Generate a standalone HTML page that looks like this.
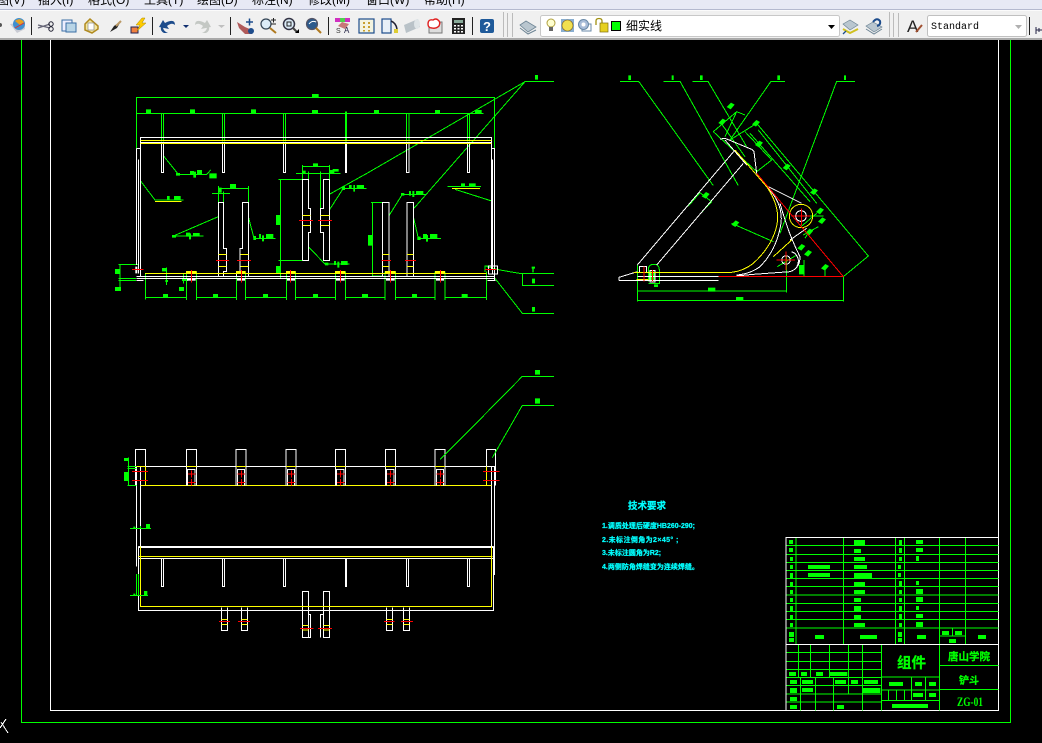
<!DOCTYPE html>
<html><head><meta charset="utf-8"><style>
html,body{margin:0;padding:0;background:#000;width:1042px;height:743px;overflow:hidden}
svg{display:block}
.z{stroke-width:3;fill:none;shape-rendering:crispEdges}
.g{stroke:#0f0}.w{stroke:#fff}.y{stroke:#ff0}.r{stroke:#f00}
.f{fill:#0f0;stroke:none}
.l{stroke-width:1;fill:none;shape-rendering:crispEdges}
text{font-family:"Liberation Sans","Noto Sans CJK SC",sans-serif}
</style></head><body>
<svg width="1042" height="743" viewBox="0 0 1042 743" xmlns="http://www.w3.org/2000/svg">
<defs>
<path id="b" d="M-12,3L1,-10L12,-4L0,10Z"/>
<g id="tab"><path class="z w" d="M0,346V238H30V346M4,346V298H26V346"/><path class="z y" d="M0,289H30"/><path class="z r" d="M5,312H27M16,302V322M5,337H27M16,327V346"/></g>
</defs>

<!-- chrome -->
<rect width="1042" height="40" fill="#f0f0f0"/>
<rect width="1042" height="9" fill="#e7e9f5"/>
<rect y="9" width="1042" height="1" fill="#b4b9cf"/>
<rect y="10" width="1042" height="1" fill="#fbfbfb"/>
<rect y="38" width="1042" height="2" fill="#a9a9a9"/>
<g font-size="12" fill="#000">
<text x="-3" y="4">图(V)</text><text x="38" y="4">插入(I)</text><text x="88" y="4">格式(O)</text><text x="144" y="4">工具(T)</text><text x="197" y="4">绘图(D)</text><text x="252" y="4">标注(N)</text><text x="308" y="4">修改(M)</text><text x="366" y="4">窗口(W)</text><text x="424" y="4">帮助(H)</text>
</g>
<path stroke="#222" stroke-width="1" d="M31.5,17V35M152.5,17V35M230.5,17V35M328.5,17V35M472.5,17V35M1029.5,17V35" shape-rendering="crispEdges"/>
<path stroke="#bbb" stroke-width="1" d="M503.5,12V37M507.5,13V37M512.5,13V37M889.5,12V37M893.5,13V37M898.5,13V37" shape-rendering="crispEdges"/>
<!-- icons left -->
<circle cx="0" cy="25" r="2" fill="#555"/>
<path d="M10,24L17,33L25,29V22Z" fill="#c9cbd3"/><circle cx="19" cy="24" r="6" fill="#3f8fd0"/><path d="M15,21Q20,17 24,22L20,25Z" fill="#e8a020"/><path d="M15,28L24,23" stroke="#d33" stroke-width="1"/>
<path d="M38,25L50,28M38,28L50,24" stroke="#667" stroke-width="1.2"/><circle cx="51" cy="24" r="2.2" fill="none" stroke="#223"/><circle cx="51" cy="29" r="2.2" fill="none" stroke="#223"/>
<rect x="62" y="20" width="10" height="11" fill="#eef" stroke="#3a6ea5"/><rect x="66" y="23" width="10" height="9" fill="#b8d4e6" stroke="#3a6ea5"/>
<path d="M85,24L90,19L98,26V29L92,33L85,30Z" fill="#f5e7a0" stroke="#b08a20" stroke-width="1.5"/><rect x="88" y="23" width="6" height="7" fill="#fff" stroke="#888" stroke-width=".7"/>
<path d="M110,32L114,26L121,21L117,28Z" fill="#222"/><path d="M116,26L121,21" stroke="#b96" stroke-width="2"/>
<rect x="131" y="27" width="7" height="6" fill="#f08040" stroke="#225" stroke-width="1"/><path d="M142,18L136,25H140L137,31L146,23H142L145,18Z" fill="#fc0" stroke="#a80" stroke-width=".5"/>
<path d="M159,27L163,20L165,23Q175,18 175,25Q172,22 167,26L169,29Z M163,27Q163,31 168,33L164,33Q160,31 161,27Z" fill="#1d4c8c"/><path d="M183,25H189L186,28Z" fill="#113070"/>
<path d="M211,27L207,20L205,23Q195,18 195,25Q198,22 203,26L201,29Z M207,27Q207,31 202,33L206,33Q210,31 209,27Z" fill="#c4c8c4"/><path d="M218,25H225L221.500,28Z" fill="#c0c0c0"/>
<path d="M237,22L245,27L252,30V34H245L239,28Z" fill="#b05a5a"/><circle cx="251" cy="31" r="3" fill="#1d4c8c"/><path d="M246,22H253M249.500,18.500V25.500" stroke="#1d4c8c" stroke-width="1.500"/>
<circle cx="266" cy="24" r="5" fill="#dcecf8" stroke="#345" stroke-width="1.200"/><path d="M270,28L276,33" stroke="#b07a20" stroke-width="2"/><path d="M271,20H276M273.500,18V22.500M271,24H276" stroke="#222" stroke-width="1"/>
<circle cx="289" cy="24" r="5.500" fill="#dcecf8" stroke="#334" stroke-width="1.500"/><rect x="287" y="22" width="4" height="4" fill="none" stroke="#222"/><path d="M293,28L297,32" stroke="#444" stroke-width="2"/><path d="M295,33H299V29Z" fill="#000"/>
<circle cx="312" cy="24" r="5.500" fill="#2b5a8c" stroke="#556" stroke-width="1.200"/><path d="M309,24Q312,20 316,22" stroke="#fff" fill="none"/><path d="M316,28L321,33" stroke="#b07a20" stroke-width="2"/>
<rect x="335" y="18" width="15" height="4" fill="#d030c0"/><rect x="340" y="18" width="5" height="4" fill="#50d050"/><path d="M342,22L349,24L345,29L338,26Z" fill="#c87878"/><text x="336" y="33" font-size="7" fill="#333">S</text><text x="344" y="33" font-size="8" fill="#224">A</text>
<rect x="359" y="19" width="15" height="14" fill="#f4f4e0" stroke="#1d4c8c" stroke-width="1.200"/><path d="M363,22h2v2h-2zM368,22h2v2h-2zM363,26h2v2h-2zM368,26h2v2h-2zM363,30h2v1.500h-2zM368,30h2v1.500h-2z" fill="#c8a030"/>
<rect x="382" y="19" width="9" height="14" fill="#e8f0f8" stroke="#1d4c8c" stroke-width="1.200"/><path d="M391,21Q396,23 397,29" stroke="#223" fill="none" stroke-width="1.500"/><rect x="394" y="29" width="4" height="4" fill="#dc3"/>
<path d="M404,25L418,19L420,27L406,33Z" fill="#b9c2c8"/><ellipse cx="417" cy="24" rx="3" ry="5" fill="#dfe5e8"/>
<rect x="429" y="22" width="13" height="11" fill="#ddd" stroke="#777" stroke-width="1"/><path d="M428,24Q428,19 433,20Q436,18 438,20Q441,22 439,26Q436,29 432,28Q428,28 428,24Z" fill="#fff" stroke="#e02020" stroke-width="1.400"/>
<rect x="452" y="18" width="13" height="16" fill="#222"/><rect x="454" y="20" width="9" height="3" fill="#8a9"/><path d="M454,25h2v1.500h-2zM457.500,25h2v1.500h-2zM461,25h2v1.500h-2zM454,28h2v1.500h-2zM457.500,28h2v1.500h-2zM461,28h2v1.500h-2zM454,31h2v1.500h-2zM457.500,31h2v1.500h-2zM461,31h2v1.500h-2z" fill="#fff"/>
<rect x="480" y="19" width="14" height="14" rx="2" fill="#1f5a9a"/><text x="483" y="31" font-size="13" font-weight="bold" fill="#fff">?</text>
<!-- layers -->
<path d="M520,25L526,21L536,27L528,32Z" fill="#b9c6cf" stroke="#6d8494" stroke-width=".8"/><path d="M520,28L528,34L536,30" fill="none" stroke="#6d8494"/>
<rect x="540.500" y="15.500" width="299" height="21" rx="2" fill="#fff" stroke="#c8c8c8"/>
<circle cx="551" cy="23" r="4" fill="#ffffd0" stroke="#b0a040"/><rect x="549" y="27" width="4" height="4" fill="#666"/>
<rect x="561" y="19" width="13" height="13" fill="#3a78b0" opacity=".6"/><circle cx="567.500" cy="25.500" r="5.500" fill="#f0e050" stroke="#806020" stroke-width=".6"/>
<rect x="582" y="24" width="9" height="7" fill="#fff" stroke="#6a8aa8"/><circle cx="583.500" cy="24.500" r="5" fill="#a8bcd8" stroke="#6a8aa8"/><circle cx="583.500" cy="24.500" r="2" fill="#fff"/>
<path d="M596,25V21Q596,18.500 599,18.500Q602,18.500 602,21V24" fill="none" stroke="#a09010" stroke-width="1.300"/><rect x="600" y="23" width="8" height="9" fill="#e6d020" stroke="#807010" stroke-width=".7"/>
<rect x="611.500" y="21.500" width="9" height="9" fill="#0f0" stroke="#000"/>
<text x="626" y="30" font-size="12" fill="#000" style="font-family:'Liberation Sans','WenQuanYi Zen Hei',sans-serif">细实线</text>
<path d="M828,25H835L831.500,29Z" fill="#000"/>
<path d="M843,24L850,20L858,25L850,30Z" fill="#b9c6cf" stroke="#6d8494" stroke-width=".7"/><path d="M843,29L850,33L858,29" fill="none" stroke="#d0c020" stroke-width="2"/><path d="M843,34L846,31" stroke="#1d4c8c" stroke-width="1.300"/>
<path d="M866,26L873,22L882,27L874,32Z" fill="#b9c6cf" stroke="#6d8494" stroke-width=".7"/><path d="M873,22Q877,17 880,21Q881,25 877,26" stroke="#1d4c8c" fill="none" stroke-width="2"/><path d="M866,29L874,34L882,29" stroke="#6d8494" fill="none"/>
<text x="907" y="32" font-size="17" fill="#222">A</text><path d="M916,32L922,25" stroke="#a05030" stroke-width="2"/>
<rect x="927.500" y="15.500" width="99" height="21" rx="2" fill="#fff" stroke="#c0c0c0"/>
<text x="931" y="29" font-size="10" fill="#000" style="font-family:'Liberation Mono',monospace">Standard</text>
<path d="M1015,25H1022L1018.500,29Z" fill="#b0b0b0"/>
<path d="M1036,27V34M1036,30H1042M1039,28V32" stroke="#224" stroke-width="1"/>

<!-- frames -->
<g class="l">
<path stroke="#0f0" d="M21.500,40V722.500H1010.500V40"/>
<path stroke="#fff" d="M50.500,40V710.500H998.500V40"/>
<path stroke="#fff" d="M6,719L0,728M1,722L8,733"/>
</g>

<!-- front view -->
<g transform="translate(110,70) scale(.33333)">
<g class="z g">
<path d="M80,235V82H1153V235M80,130H1120M154,130V215M161,130V215M337,130V215M344,130V215M520,130V215M527,130V215M706,125V215M709,125V215M890,130V215M897,130V215M1072,130V215M1079,130V215"/>
<path d="M106,610V688M230,605V690M259,605V690M379,610V690M406,610V690M530,605V690M556,605V690M677,605V690M706,605V690M825,605V690M856,605V690M975,605V690M1005,605V690M1130,605V690M106,682H230M259,682H379M406,682H530M556,682H677M706,682H825M856,682H975M1005,682H1130"/>
<path d="M577,285V340M658,285V340M577,290H658M558,310H692M595,305V330M631,305V415M512,328V625M505,328H577M505,571H577M505,625H578"/>
<path d="M325,348V397M415,348V397M325,355H415M306,370H360M340,365V397"/>
<path d="M787,397V618M783,397H817M787,618H817"/>
<path d="M160,257L205,313H290L302,300M91,332L135,390H220M325,440L190,498H280M415,440L432,505H497M595,530L645,582H718M658,420L700,355H770"/>
<path d="M658,373L776,307L1245,35H1332M910,417L1245,35M837,437L877,373H950M910,440L925,505H993M1012,349H1113M1035,358L1145,393"/>
<path d="M1125,606V588H1140M1130,590L1170,600L1228,610H1332M1237,610V647H1332M1155,625L1237,730H1332"/>
<path d="M25,583H85M30,583V660M25,626H78M25,631H78M170,592V645M220,610V640"/>
</g>
<path class="f" d="M606,72h20v10h-20zM108,118h15v12h-15zM240,118h15v12h-15zM423,118h15v12h-15zM606,120h18v10h-18zM792,120h15v10h-15zM975,120h15v10h-15zM1095,120h20v10h-20zM159,672h15v10h-15zM309,672h15v10h-15zM459,672h15v10h-15zM609,672h15v10h-15zM756,672h18v10h-18zM906,672h15v10h-15zM1055,672h18v10h-18zM609,280h15v10h-15zM577,302h10v8h-10zM658,300h15v12h-15zM668,297h18v8h-18zM360,342h18v13h-18zM325,353h10v15h-10zM498,435h14v30h-14zM498,588h14v22h-14zM774,495h14v32h-14zM198,309h12v8h-12zM240,303h12v10h-12zM261,300h15v12h-15zM250,305h8v18h-8zM298,310h22v15h-22zM171,378h8v12h-8zM192,378h20v12h-20zM186,495h12v8h-12zM228,488h12v12h-12zM249,489h20v10h-20zM237,490h6v18h-6zM430,498h8v12h-8zM447,492h6v12h-6zM468,492h22v14h-22zM456,496h6v18h-6zM645,578h10v8h-10zM672,573h6v12h-6zM693,573h20v12h-20zM682,575h6v18h-6zM695,350h10v10h-10zM717,345h8v10h-8zM740,345h22v10h-22zM730,345h5v20h-5zM873,369h10v8h-10zM897,363h6v14h-6zM907,363h6v18h-6zM918,363h22v12h-22zM922,500h10v10h-10zM939,492h12v12h-12zM960,492h22v12h-22zM948,495h6v20h-6zM1053,340h12v9h-12zM1077,340h20v9h-20zM1275,15h9v14h-9zM1265,590h10v6h-10zM1267,595h4v12h-4zM1266,626h9v14h-9zM1266,711h9v14h-9zM15,597h16v15h-16zM15,651h18v12h-18zM156,594h14v10h-14zM166,630h8v6h-8zM207,651h15v12h-15zM216,627h18v6h-18z"/>
<g class="z w">
<path d="M80,235H91M91,618V203H1145V600M80,235V585M86,268V610M1145,235H1153V630M1148,268V610M80,619H1155M80,626H1155M80,632H100M1133,632H1157"/>
<path d="M154,220V307H161V220M337,220V307H344V220M520,220V307H527V220M706,220V307H709V220M890,220V307H897V220M1072,220V307H1079V220"/>
<path d="M325,618V397H340V535H350V605H340V618M415,618V397H397V535H390V605H380V618"/>
<path d="M817,618V397H837V618M891,618V397H911V618"/>
<path d="M577,572V328H595V415H602V487H595V572H577M658,328V572H640V487H631V415H640V328H658"/>
<path d="M1135,588H1163V612H1135Z" />
<path d="M1145,217H91" />
</g>
<g class="z y">
<path d="M91,211H1145M91,220H1145M105,610H1130M135,394H215M1026,355H1110"/>
<path d="M325,553H350M325,590H350M391,553H415M391,590H415M817,553H837M817,590H837M891,553H911M891,590H911M577,436H602M577,466H602M631,436H658M631,466H658"/>
</g>
<path d="M228,603h32v8h-32zM378,603h29v8h-29zM528,603h29v8h-29zM675,603h31v8h-31zM825,603h32v8h-32zM975,603h30v8h-30z" fill="#ff0"/>
<path d="M231,626h26v6h-26zM381,626h24v6h-24zM531,626h24v6h-24zM678,626h26v6h-26zM828,626h26v6h-26zM978,626h24v6h-24zM76,590h6v20h-6z" fill="#fff"/>
<g class="z r">
<path d="M318,571H357M381,571H423M814,571H843M885,571H918M567,451H609M624,451H666M66,598H100M1125,598H1160"/>
<path d="M244,600V638M394,600V638M541,600V638M691,600V638M841,600V638M991,600V638"/>
</g>
</g>

<!-- side view -->
<g transform="translate(610,70) scale(.33333)">
<g class="z g">
<path d="M30,34H86L310,347M160,34H210L385,347M247,34H294L410,230M525,34H483L360,210M735,34H680L510,490"/>
<path d="M310,185L380,125L405,135M310,185L440,305M360,210L440,160M405,185L485,270L440,305M330,155L405,260M380,125L345,200M440,160L775,558L700,620M445,180L620,400M420,190L600,395"/>
<path d="M235,408L270,368M270,432L305,395M270,368L305,395M365,460L490,515"/>
<path d="M82,585V695M700,620V695M82,663H530M82,692H700M530,560V668M530,620H700M582,570V620M645,620V590M502,590L560,555M580,495L625,470M585,505L600,480M545,438H640M573,470L620,430"/>
<path d="M115,635V600Q115,583 132,583Q148,583 148,600V640H115"/>
</g>
<g class="f"><use href="#b" x="362" y="108"/><use href="#b" x="337" y="156"/><use href="#b" x="438" y="160"/><use href="#b" x="447" y="222"/><use href="#b" x="530" y="291"/><use href="#b" x="612" y="365"/><use href="#b" x="630" y="423"/><use href="#b" x="636" y="452"/><use href="#b" x="598" y="486"/><use href="#b" x="574" y="532"/><use href="#b" x="594" y="550"/><use href="#b" x="645" y="592"/><use href="#b" x="376" y="461"/><use href="#b" x="287" y="376"/>
<path d="M55,16h8v14h-8zM185,16h6v14h-6zM270,16h8v14h-8zM502,16h8v14h-8zM702,16h6v14h-6zM294,653h22v12h-22zM378,681h22v12h-22zM567,585h14v28h-14zM132,643h12v8h-12zM115,605h20v25h-20z"/></g>
<g class="z w">
<path d="M82,585L375,240M140,585L400,280M330,207L345,205L425,238L432,245L440,310M345,210L410,285"/>
<path d="M27,632V622L82,605M27,632H325M82,619H325"/>
<path d="M470,350Q520,400 513,460Q500,540 450,590Q420,612 380,615"/>
<path d="M475,350L575,400M510,400C530,470 545,510 570,560C570,590 555,600 540,605L430,613L380,618M540,510L590,475"/>
<circle cx="573" cy="438" r="16"/><circle cx="528" cy="570" r="13"/><path d="M545,545A30,30 0 0 1 560,590"/>
<path d="M88,590h22v18h-22zM120,602h15v34h-15z"/>
</g>
<g class="z y">
<path d="M375,240L470,350Q505,400 503,450Q495,520 430,580Q400,603 365,607H100M70,608H115M80,628H115M490,560L545,510"/>
<circle cx="573" cy="438" r="35"/>
</g>
<g class="z r">
<path d="M440,310L700,620H325M545,438H600M575,415V465M500,570H555M528,545V600M102,590V635M128,600V635"/>
</g>
</g>

<!-- plan view -->
<g transform="translate(110,370) scale(.33333)">
<path class="z w" d="M76,346V238H107V346M1129,346V238H1157V346M76,290H1157M80,290V590M91,290V700M1145,290V615M1154,290V615"/>
<path class="z y" d="M92,346H1145M107,290V346M1129,290V346M76,289H107"/>
<use href="#tab" x="229"/><use href="#tab" x="378"/><use href="#tab" x="528"/><use href="#tab" x="676"/><use href="#tab" x="826"/><use href="#tab" x="975"/>
<path class="z r" d="M66,304H114M66,331H114M1119,304H1169M1119,331H1169"/>
<path d="M85,528h1066v6h-1066z" fill="#fff"/>
<g class="z w">
<path d="M85,530V721H1151V530M85,566H1151"/>
<path d="M154,566V650H161V566M337,566V650H344V566M520,566V650H527V566M706,566V650H709V566M889,566V650H896V566M1072,566V650H1079V566"/>
<path d="M334,712V782H353V712M394,712V782H413V712M829,712V782H848V712M880,712V782H899V712"/>
<path d="M596,733H602V803H596M631,803V733H640"/>
<path d="M577,664H596V803H577ZM640,664H659V803H640Z"/>
</g>
<path class="z y" d="M91,530V709H1145V530M85,559H1147M334,748H353M334,763H353M394,748H413M394,763H413M829,748H848M829,763H848M880,748H899M880,763H899M577,767H596M577,780H596M640,767H659M640,780H659"/>
<path class="z r" d="M327,754H360M384,754H420M822,754H854M873,754H909M570,775H610M624,775H666"/>
<path class="z g" d="M55,262V346M52,290H80M52,295H80M52,346H80M60,475H123M60,676H114M80,612V676M85,612V676M991,268L1115,143L1237,19H1332M1147,263L1237,106H1332"/>
<path class="f" d="M42,264h14v9h-14zM42,306h14v27h-14zM108,462h12v13h-12zM70,470h6v4h-6zM90,468h3v6h-3zM102,663h10v13h-10zM70,671h6v4h-6zM1275,0h15v14h-15zM1275,85h15v16h-15z"/>
</g>

<!-- title block -->
<g transform="translate(780,530) scale(.33333)">
<path class="z g" d="M18,47H655M18,73H655M18,97H655M18,121H655M18,145H655M18,169H655M18,195H655M18,220H655M18,244H655M18,268H655M18,294H655M48,22V343M190,22V343M346,22V343M373,22V343M478,22V343M556,22V343M478,318H556M518,294V318"/>
<path class="z g" d="M18,368H304M18,394H304M18,418H304M18,442H304M18,466H304M18,492H304M18,516H304M55,343V442M91,343V442M148,343V442M205,343V492M247,343V541M61,442V541M106,442V541M160,442V541M304,343V541M478,343V541M304,441H478M304,480H478M304,511H478M394,441V511M436,441V511M325,480V511M350,480V511M373,480V511M478,406H655M478,478H655"/>
<path class="z w" d="M655,22H18V541M18,343H655"/>
<path class="f" d="M27,30h12v12h-12zM27,54h12v12h-12zM30,81h9v12h-9zM30,105h9v12h-9zM30,129h9v15h-9zM30,156h9v12h-9zM30,180h9v12h-9zM30,204h9v12h-9zM30,228h9v15h-9zM30,255h9v12h-9zM30,279h9v12h-9zM27,306h15v15h-15zM27,324h15v12h-15z"/>
<path class="f" d="M222,30h33v15h-33zM222,57h21v12h-21zM222,81h33v12h-33zM222,105h39v12h-39zM222,129h54v15h-54zM222,156h33v12h-33zM222,180h33v12h-33zM222,204h21v12h-21zM222,228h21v15h-21zM222,255h21v12h-21zM222,279h33v12h-33zM84,105h66v12h-66zM84,129h66v12h-66zM105,315h27v12h-27zM240,315h51v12h-51z"/>
<path class="f" d="M357,30h9v15h-9zM357,54h9v15h-9zM357,81h9v12h-9zM354,105h9v12h-9zM354,129h9v12h-9zM357,153h9v15h-9zM357,180h9v12h-9zM357,204h9v12h-9zM357,228h9v15h-9zM357,252h9v15h-9zM357,279h9v12h-9zM354,306h12v15h-12zM354,324h12v12h-12z"/>
<path class="f" d="M408,30h21v12h-21zM408,54h21v12h-21zM408,78h9v15h-9zM408,153h9v12h-9zM408,177h21v15h-21zM408,201h21v15h-21zM408,228h9v12h-9zM408,252h21v12h-21zM408,276h21v15h-21zM411,315h27v12h-27zM486,303h21v12h-21zM525,303h21v12h-21zM507,327h21v12h-21zM594,315h24v12h-24z"/>
<path class="f" d="M27,426h21v12h-21zM63,426h18v12h-18zM108,426h21v12h-21zM148,426h54v12h-54zM30,450h21v12h-21zM66,450h33v12h-33zM165,450h33v12h-33zM213,450h21v12h-21zM252,450h42v12h-42zM30,474h21v15h-21zM66,474h33v12h-33zM247,474h54v15h-54zM30,501h21v12h-21zM30,525h21v12h-21zM171,525h21v12h-21z"/>
<path class="f" d="M327,456h42v12h-42zM405,456h21v12h-21zM447,456h21v12h-21zM399,489h30v12h-30zM447,489h21v12h-21zM336,522h108v12h-108z"/>
</g>
<g fill="#0f0" stroke="#0f0" stroke-width=".3" font-weight="bold" style="font-family:'Noto Serif CJK SC',serif">
<text x="897" y="668" font-size="14.500" letter-spacing="0">组件</text>
<text x="948" y="660" font-size="10.500">唐山学院</text>
<text x="959" y="684" font-size="10">铲斗</text>
</g>
<text x="957" y="706" font-size="13" fill="#0f0" textLength="26" lengthAdjust="spacingAndGlyphs" style="font-family:'Liberation Serif',serif" font-weight="bold">ZG-01</text>

<!-- notes -->
<g fill="#0ff" stroke="#0ff" stroke-width=".25" font-weight="bold" style="font-family:'Noto Sans CJK SC',sans-serif">
<text x="628" y="509" font-size="9.500">技术要求</text>
<text x="602" y="528" font-size="7">1.调质处理后硬度HB260-290;</text>
<text x="602" y="542" font-size="7" letter-spacing=".4">2.未标注倒角为2×45° ;</text>
<text x="602" y="555" font-size="7">3.未标注圆角为R2;</text>
<text x="602" y="569" font-size="7">4.两侧防角焊缝变为连续焊缝。</text>
</g>
</svg>
</body></html>
